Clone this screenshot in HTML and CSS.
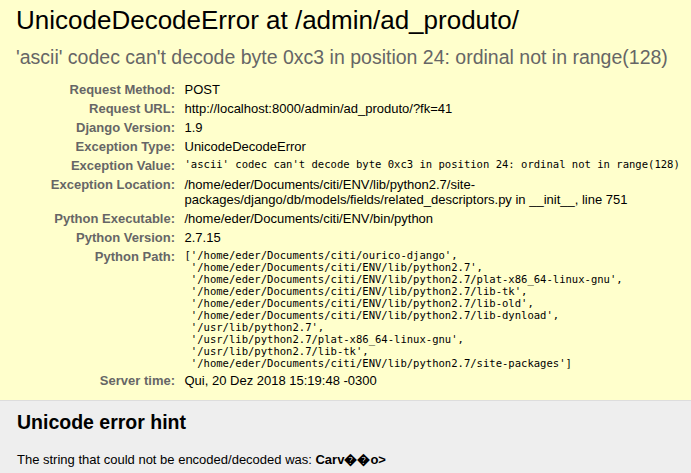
FILE: index.html
```html
<!DOCTYPE html>
<html lang="en">
<head>
<meta charset="utf-8">
<title>UnicodeDecodeError at /admin/ad_produto/</title>
<link rel="stylesheet" href="styles.css">
</head>
<body>
<div id="summary" class="panel">
  <h1 class="title">UnicodeDecodeError at /admin/ad_produto/</h1>
  <pre class="exception-value">'ascii' codec can't decode byte 0xc3 in position 24: ordinal not in range(128)</pre>
  <table class="meta">
    <tbody>
      <tr><th>Request Method:</th><td>POST</td></tr>
      <tr><th>Request URL:</th><td>http://localhost:8000/admin/ad_produto/?fk=41</td></tr>
      <tr><th>Django Version:</th><td>1.9</td></tr>
      <tr><th>Exception Type:</th><td>UnicodeDecodeError</td></tr>
      <tr><th>Exception Value:</th><td><pre class="mono">'ascii' codec can't decode byte 0xc3 in position 24: ordinal not in range(128)</pre></td></tr>
      <tr><th>Exception Location:</th><td>/home/eder/Documents/citi/ENV/lib/python2.7/site-packages/django/db/models/fields/related_descriptors.py in __init__, line 751</td></tr>
      <tr><th>Python Executable:</th><td>/home/eder/Documents/citi/ENV/bin/python</td></tr>
      <tr><th>Python Version:</th><td>2.7.15</td></tr>
      <tr><th>Python Path:</th><td><pre class="mono">['/home/eder/Documents/citi/ourico-django',
 '/home/eder/Documents/citi/ENV/lib/python2.7',
 '/home/eder/Documents/citi/ENV/lib/python2.7/plat-x86_64-linux-gnu',
 '/home/eder/Documents/citi/ENV/lib/python2.7/lib-tk',
 '/home/eder/Documents/citi/ENV/lib/python2.7/lib-old',
 '/home/eder/Documents/citi/ENV/lib/python2.7/lib-dynload',
 '/usr/lib/python2.7',
 '/usr/lib/python2.7/plat-x86_64-linux-gnu',
 '/usr/lib/python2.7/lib-tk',
 '/home/eder/Documents/citi/ENV/lib/python2.7/site-packages']</pre></td></tr>
      <tr><th>Server time:</th><td>Qui, 20 Dez 2018 15:19:48 -0300</td></tr>
    </tbody>
  </table>
</div>
<div id="unicode-hint" class="panel">
  <h2 class="hint-title">Unicode error hint</h2>
  <p class="hint-text">The string that could not be encoded/decoded was: <strong>Carv&#xFFFD;&#xFFFD;o&gt;</strong></p>
</div>
</body>
</html>
```
FILE: styles.css
```css
html, body, div, h1, h2, p, pre, table, th, td {
  margin: 0;
  padding: 0;
}
body {
  font: 13px "Liberation Sans", Arial, sans-serif;
  color: #000;
  background: #fff;
}
.panel {
  border-bottom: 1px solid #ddd;
}
#summary {
  background: #ffc;
  padding: 5px 4px 10px 16px;
}
#unicode-hint {
  background: #eee;
  padding: 10px 20px 10px 17px;
  min-height: 60px;
}
.title {
  font-size: 26px;
  font-weight: normal;
}
.exception-value {
  font-family: "Liberation Sans", Arial, sans-serif;
  font-size: 19.5px;
  color: #666;
  margin: 10px 0 11px;
  white-space: pre-wrap;
}
.meta {
  border: none;
  border-collapse: collapse;
  width: 100%;
  background: transparent;
}
.meta th,
.meta td {
  vertical-align: top;
  padding: 2px 3px;
}
.meta th {
  width: 156px;
  text-align: right;
  color: #666;
  font-weight: bold;
  padding-right: 6.5px;
}
.mono {
  font-family: "DejaVu Sans Mono", monospace;
  font-size: 10.56px;
  white-space: pre-wrap;
}
.hint-title {
  font-size: 19.5px;
  font-weight: bold;
  margin-bottom: 15.6px;
}
.hint-text strong {
  font-weight: bold;
}
```
